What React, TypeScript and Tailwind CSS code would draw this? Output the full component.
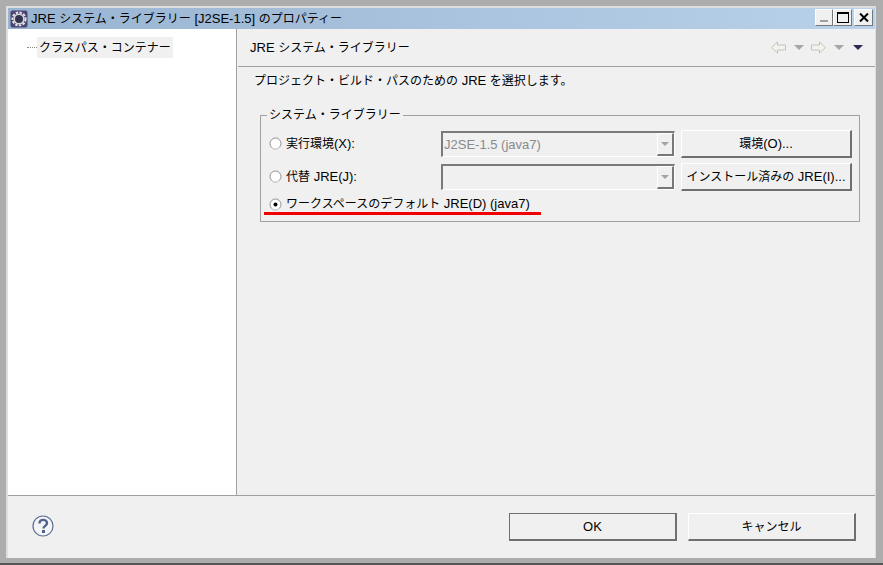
const font = "font-['Liberation_Sans','Noto_Sans_CJK_JP',sans-serif]"

// the original UI font draws kana at 12px next to 13px latin
function T({ children }: { children: string }) {
  return (
    <>
      {children.split(/([\u3000-\u9fff\uff00-\uffef]+)/).map((part, i) =>
        i % 2 === 1 ? (
          <span key={i} className="text-[12px]">
            {part}
          </span>
        ) : (
          part
        )
      )}
    </>
  )
}

function Raised({ label, className }: { label: string; className: string }) {
  return (
    <div
      className={`flex items-center justify-center whitespace-nowrap border-t border-l border-t-white border-l-white border-r-2 border-b-2 border-r-[#6f6f6f] border-b-[#6f6f6f] bg-[#f0f0f0] ${className}`}
    >
      <span>
        <T>{label}</T>
      </span>
    </div>
  )
}

function Radio({ checked, className = "" }: { checked?: boolean; className?: string }) {
  return (
    <svg width="13" height="13" viewBox="0 0 13 13" className={`shrink-0 ${className}`}>
      <circle cx="6.5" cy="6.5" r="5.5" fill="#fff" stroke="#8f8f8f" />
      <path d="M3 10.5a5.5 5.5 0 0 0 7.5 0" fill="none" stroke="#e3e3e3" />
      {checked && <circle cx="6.5" cy="6.5" r="2" fill="#000" />}
    </svg>
  )
}

function Combo({ value }: { value?: string }) {
  return (
    <div className="flex h-[26px] w-[234px] shrink-0 items-stretch border-t-2 border-l-2 border-t-[#7a7a7a] border-l-[#7a7a7a] border-r border-b border-r-white border-b-white bg-[#f0f0f0]">
      <div className="flex flex-1 items-center pl-[1px] text-[#8a8a8a]">{value}</div>
      <div className="flex w-[17px] items-center justify-center border-t border-l border-t-white border-l-white border-r-2 border-b-2 border-r-[#777] border-b-[#777]">
        <div className="h-0 w-0 border-x-[4px] border-t-[4px] border-x-transparent border-t-[#a3a3a3]" />
      </div>
    </div>
  )
}

function NavArrow({ flip }: { flip?: boolean }) {
  return (
    <svg width="15" height="13" viewBox="0 0 15 13" className={flip ? "-scale-x-100" : ""}>
      <path d="M6.5 1 .5 6.5 6.5 12V9h8V4h-8z" fill="#f3f3ee" stroke="#c3c3bc" />
    </svg>
  )
}

function Caret({ dark }: { dark?: boolean }) {
  return (
    <div
      className={`h-0 w-0 border-x-[5px] border-t-[5px] border-x-transparent ${dark ? "border-t-[#2c2a55]" : "border-t-[#a6a6a6]"}`}
    />
  )
}

const capBtn =
  "flex h-[17px] items-center justify-center border-t border-l border-t-white border-l-white border-r border-b border-r-[#777] border-b-[#777] bg-[#f0f0f0]"

export default function App() {
  return (
    <div className={`flex h-[565px] w-[883px] flex-col overflow-hidden border-b-2 border-b-[#555] bg-[#adadad] pl-[6px] pt-[6px] pr-[7px] pb-[5px] ${font} text-[13px] leading-[18px] text-black`}>
      <div className="flex flex-1 flex-col border-t-2 border-l-2 border-r border-[#dedede]">
        <div className="flex h-[21px] justify-between bg-gradient-to-r from-[#99b4d1] to-[#b9d1ea] pl-[2px] pr-[2px]">
          <div className="flex items-center gap-[3px]">
            <svg width="18" height="18" viewBox="0 0 18 18">
              <rect x="0.5" y="0.5" width="17" height="17" rx="2" fill="#4b4674" />
              <circle cx="9" cy="9" r="6.5" fill="none" stroke="#e4e4e8" strokeWidth="2" strokeDasharray="2.4 1.4" />
              <circle cx="9" cy="9" r="4.8" fill="#33344f" stroke="#d8d8de" strokeWidth="1.6" />
            </svg>
            <span className="whitespace-nowrap">
              <T>JRE システム・ライブラリー [J2SE-1.5] のプロパティー</T>
            </span>
          </div>
          <div className="flex pt-[1px]">
            <div className={`${capBtn} w-[18px] !items-end pb-[3px]`}>
              <div className="h-[2px] w-[8px] bg-[#a0a0a0]" />
            </div>
            <div className={`${capBtn} w-[19px]`}>
              <div className="h-[11px] w-[12px] border border-t-2 border-black" />
            </div>
            <div className={`${capBtn} ml-[2px] w-[19px]`}>
              <svg width="10" height="9" viewBox="0 0 10 9">
                <path d="M1 .5 9 8.5M9 .5 1 8.5" stroke="#000" strokeWidth="2" />
              </svg>
            </div>
          </div>
        </div>

        <div className="flex flex-1 flex-col bg-[#f0f0f0]">
          <div className="flex flex-1 border-b border-b-[#a0a0a0]">
            <div className="w-[229px] shrink-0 border-r border-r-[#a0a0a0] bg-white">
              <div className="flex pl-[19px] pt-[8px]">
                <div className="mt-[10px] h-0 w-[10px] border-t border-dotted border-t-[#888]" />
                <div className="flex h-[21px] w-[136px] items-center bg-[#f0f0f0] px-[2px]">
                  <span>
                    <T>クラスパス・コンテナー</T>
                  </span>
                </div>
              </div>
            </div>
            <div className="flex flex-1 flex-col">
              <div className="ml-[1px] flex h-[38px] items-center justify-between border-b border-b-[#a0a0a0] pl-[12px] pr-[12px]">
                <span className="pt-[1px]">
                  <T>JRE システム・ライブラリー</T>
                </span>
                <div className="flex items-center">
                  <NavArrow />
                  <div className="ml-[8px]"><Caret /></div>
                  <div className="ml-[7px]"><NavArrow flip /></div>
                  <div className="ml-[8px]"><Caret /></div>
                  <div className="ml-[9px]"><Caret dark /></div>
                </div>
              </div>
              <div className="pl-[17px] pt-[5px]">
                <div>
                  <T>プロジェクト・ビルド・パスのための JRE を選択します。</T>
                </div>
                <div className="relative mt-[25px] ml-[6px] h-[107px] w-[600px] border border-[#a0a0a0] pl-[8px] pt-[14px]">
                  <span className="absolute left-[6px] top-[-10px] bg-[#f0f0f0] px-[2px]">
                    <T>システム・ライブラリー</T>
                  </span>
                  <div className="flex h-[28px] items-center">
                    <Radio className="mt-[-2px]" />
                    <span className="ml-[4px] w-[155px] shrink-0">
                      <T>実行環境(X):</T>
                    </span>
                    <Combo value="J2SE-1.5 (java7)" />
                    <Raised label="環境(O)..." className="ml-[6px] h-[28px] w-[171px] shrink-0" />
                  </div>
                  <div className="mt-[5px] flex h-[28px] items-center">
                    <Radio className="mt-[-2px]" />
                    <span className="ml-[4px] w-[155px] shrink-0">
                      <T>代替 JRE(J):</T>
                    </span>
                    <Combo />
                    <Raised label="インストール済みの JRE(I)..." className="ml-[6px] h-[28px] w-[171px] shrink-0" />
                  </div>
                  <div className="relative mt-[2px] flex h-[22px] items-center">
                    <Radio checked />
                    <span className="ml-[4px] whitespace-nowrap">
                      <T>ワークスペースのデフォルト JRE(D) (java7)</T>
                    </span>
                    <div className="absolute bottom-0 left-[-5px] h-[3px] w-[277px] bg-[#f00000]" />
                  </div>
                </div>
              </div>
            </div>
          </div>
          <div className="flex h-[62px] items-center justify-between pl-[24px] pr-[19px]">
            <svg width="22" height="22" viewBox="0 0 22 22" className="mt-[-2px]">
              <circle cx="11" cy="11" r="10" fill="#f4f4f6" stroke="#5c6f96" strokeWidth="1.2" />
              <path d="M7.5 8.5c0-5 7.5-4.5 7.5-.5 0 3-3.5 2.7-3.5 5.5" fill="none" stroke="#4f628b" strokeWidth="2.4" />
              <rect x="10" y="15" width="3" height="3" fill="#4f628b" />
            </svg>
            <div className="flex gap-[11px]">
              <Raised label="OK" className="h-[28px] w-[168px] outline outline-1 -outline-offset-1 outline-[#6f6f6f]" />
              <Raised label="キャンセル" className="h-[28px] w-[168px]" />
            </div>
          </div>
        </div>
      </div>
    </div>
  )
}
